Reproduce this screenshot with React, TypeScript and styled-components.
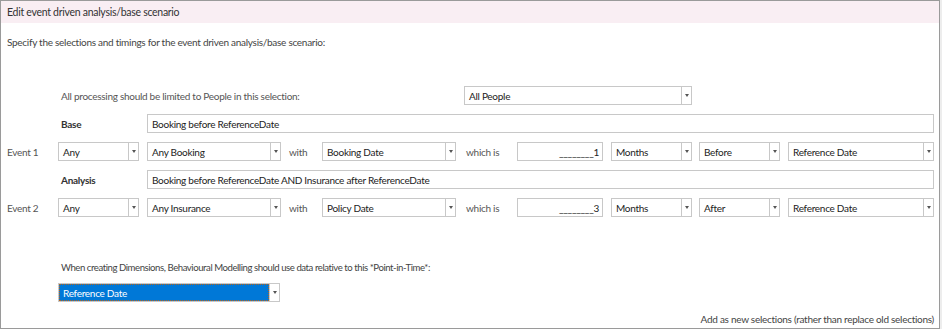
import React from "react";
import styled, { createGlobalStyle } from "styled-components";

const Global = createGlobalStyle`
  html, body { margin: 0; padding: 0; background: #ededed; }
  body { font-family: Lato, "Noto Sans", sans-serif; }
  * { box-sizing: border-box; }
`;

const Frame = styled.div`
  width: 940px;
  height: 329px;
  background: #ffffff;
  border: 1px solid #9a9a9a;
  display: flex;
  flex-direction: column;
  color: #444;
  font-size: 10px;
  letter-spacing: -0.28px;
`;

const Header = styled.div`
  height: 22px;
  background: #f9eef3;
  display: flex;
  align-items: center;
  padding-left: 6px;
  font-size: 10.5px;
  color: #333;
`;

const Body = styled.div`
  flex: 1;
  display: flex;
  flex-direction: column;
  padding: 0 5px 0 6px;
`;

const Intro = styled.div`
  margin-top: 13px;
  height: 12px;
  line-height: 12px;
`;

const Form = styled.div`
  margin-top: 38px;
  display: flex;
  flex-direction: column;
  gap: 9px;
`;

const Row = styled.div`
  display: flex;
  align-items: center;
  height: 19px;
`;

const Lead = styled.div`
  width: 51px;
  flex: none;
  color: #555;
`;

const Label = styled.div<{ $w: number; $bold?: boolean; $pad?: number }>`
  width: ${(p) => p.$w}px;
  flex: none;
  padding-left: ${(p) => p.$pad ?? 3}px;
  font-weight: ${(p) => (p.$bold ? 700 : 400)};
  color: ${(p) => (p.$bold ? "#333" : "#555")};
  white-space: nowrap;
`;

const SelectBox = styled.div<{ $w: number; $gap?: number }>`
  width: ${(p) => p.$w}px;
  margin-left: ${(p) => p.$gap ?? 0}px;
  height: 19px;
  flex: none;
  display: flex;
  border: 1px solid #c8c8c8;
  background: #fff;
`;

const SelectValue = styled.div<{ $active?: boolean }>`
  flex: 1;
  display: flex;
  align-items: center;
  padding-left: 4px;
  color: ${(p) => (p.$active ? "#fff" : "#222")};
  background: ${(p) => (p.$active ? "#0078d7" : "transparent")};
  outline: ${(p) => (p.$active ? "1px dotted #b5651d" : "none")};
  outline-offset: -1px;
  white-space: nowrap;
  overflow: hidden;
`;

const Arrow = styled.div`
  width: 10px;
  flex: none;
  border-left: 1px solid #c8c8c8;
  display: flex;
  align-items: center;
  justify-content: center;
  &::after {
    content: "";
    border-left: 2.5px solid transparent;
    border-right: 2.5px solid transparent;
    border-top: 3px solid #555;
  }
`;

const TextBox = styled.div<{ $w: number; $gap?: number; $right?: boolean }>`
  width: ${(p) => p.$w}px;
  margin-left: ${(p) => p.$gap ?? 0}px;
  height: 19px;
  flex: none;
  display: flex;
  align-items: center;
  justify-content: ${(p) => (p.$right ? "flex-end" : "flex-start")};
  padding: 0 3px 0 4px;
  border: 1px solid #c8c8c8;
  background: #fff;
  color: #222;
  white-space: nowrap;
`;

const Note = styled.div`
  margin-top: 45px;
  padding-left: 54px;
  height: 12px;
  line-height: 12px;
  font-size: 9.6px;
  letter-spacing: -0.45px;
`;

const FocusRow = styled(Row)`
  margin-top: 9px;
`;

const Footer = styled.div`
  margin-top: auto;
  margin-bottom: 3px;
  text-align: right;
  height: 12px;
  line-height: 12px;
`;

function Select({ w, gap, value, active }: { w: number; gap?: number; value: string; active?: boolean }) {
  return (
    <SelectBox $w={w} $gap={gap}>
      <SelectValue $active={active}>{value}</SelectValue>
      <Arrow />
    </SelectBox>
  );
}

function EventRow({ name, qty, who, what, date, num, dir }: { name: string; qty: string; who: string; what: string; date: string; num: string; dir: string }) {
  return (
    <Row>
      <Lead>{name}</Lead>
      <Select w={81} value={qty} />
      <Select w={134} gap={8} value={who} />
      <Label $w={41} $pad={8}>with</Label>
      <Select w={134} value={what} />
      <Label $w={61} $pad={10}>which is</Label>
      <TextBox $w={86} $right>{num}</TextBox>
      <Select w={81} gap={8} value="Months" />
      <Select w={81} gap={7} value={dir} />
      <Select w={146} gap={8} value={date} />
    </Row>
  );
}

export default function App() {
  return (
    <>
      <Global />
      <Frame>
        <Header>Edit event driven analysis/base scenario</Header>
        <Body>
          <Intro>Specify the selections and timings for the event driven analysis/base scenario:</Intro>
          <Form>
            <Row>
              <Lead />
              <Label $w={406}>All processing should be limited to People in this selection:</Label>
              <Select w={228} value="All People" />
            </Row>
            <Row>
              <Lead />
              <Label $w={89} $bold>Base</Label>
              <TextBox $w={787}>Booking before ReferenceDate</TextBox>
            </Row>
            <EventRow name="Event 1" qty="Any" who="Any Booking" what="Booking Date" date="Reference Date" num="________1" dir="Before" />
            <Row>
              <Lead />
              <Label $w={89} $bold>Analysis</Label>
              <TextBox $w={787}>Booking before ReferenceDate AND Insurance after ReferenceDate</TextBox>
            </Row>
            <EventRow name="Event 2" qty="Any" who="Any Insurance" what="Policy Date" date="Reference Date" num="________3" dir="After" />
          </Form>
          <Note>When creating Dimensions, Behavioural Modelling should use data relative to this *Point-in-Time*:</Note>
          <FocusRow>
            <Lead />
            <Select w={222} value="Reference Date" active />
          </FocusRow>
          <Footer>Add as new selections (rather than replace old selections)</Footer>
        </Body>
      </Frame>
    </>
  );
}
